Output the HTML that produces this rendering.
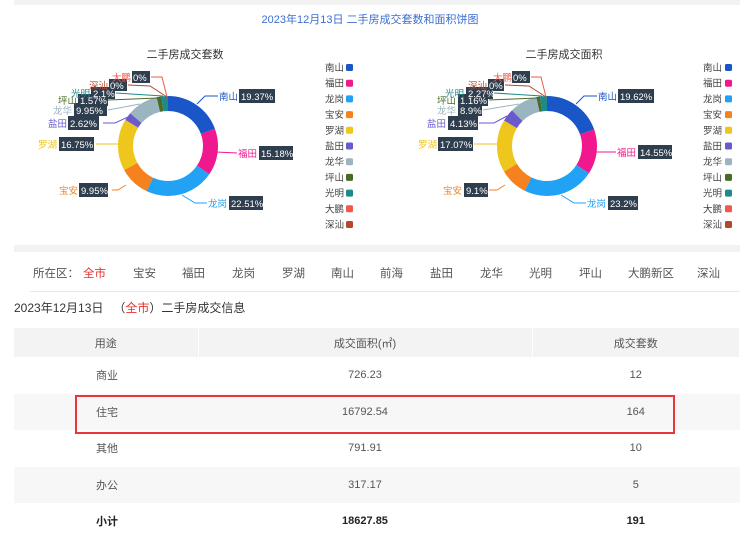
<!DOCTYPE html>
<html><head><meta charset="utf-8"><style>
*{margin:0;padding:0;box-sizing:border-box}
body{width:740px;height:534px;background:#fff;font-family:"Liberation Sans","Noto Sans CJK SC",sans-serif;color:#333;position:relative;overflow:hidden}
.abs{position:absolute}
svg text{font-family:"Liberation Sans","Noto Sans CJK SC",sans-serif}
.filter span{position:absolute;top:265px;font-size:11.5px;color:#555}
table{position:absolute;left:14px;top:328px;width:726px;border-collapse:collapse;font-size:11px;color:#555}
td{height:36.5px;text-align:center}
tr.h td{height:29px;background:#f3f3f3;border-right:1px solid #fff}
tr.g td{background:#f7f7f7}
td.l{text-align:left;padding-left:82px}
</style></head><body>
<div class="abs" style="left:14px;top:0;width:726px;height:5px;background:#f2f2f2"></div>
<div class="abs" style="left:0;top:11px;width:740px;text-align:center;font-size:11px;color:#3b6fd1">2023年12月13日 二手房成交套数和面积饼图</div>
<svg class="abs" style="left:0;top:0" width="740" height="240" font-size="9.5">
<text x="185" y="58" text-anchor="middle" font-size="11" fill="#333">二手房成交套数</text>
<text x="564" y="58" text-anchor="middle" font-size="11" fill="#333">二手房成交面积</text>
<g fill="none" stroke-width="15" transform="rotate(-90 168 146)">
<circle cx="168" cy="146" r="42.5" pathLength="100" stroke="#1a56c8" stroke-dasharray="19.37 80.63" stroke-dashoffset="0"/>
<circle cx="168" cy="146" r="42.5" pathLength="100" stroke="#f0188e" stroke-dasharray="15.18 84.82" stroke-dashoffset="-19.37"/>
<circle cx="168" cy="146" r="42.5" pathLength="100" stroke="#22a2f5" stroke-dasharray="22.51 77.49" stroke-dashoffset="-34.55"/>
<circle cx="168" cy="146" r="42.5" pathLength="100" stroke="#f5821f" stroke-dasharray="9.95 90.05" stroke-dashoffset="-57.06"/>
<circle cx="168" cy="146" r="42.5" pathLength="100" stroke="#eec61c" stroke-dasharray="16.75 83.25" stroke-dashoffset="-67.01"/>
<circle cx="168" cy="146" r="42.5" pathLength="100" stroke="#6a5acd" stroke-dasharray="2.62 97.38" stroke-dashoffset="-83.76"/>
<circle cx="168" cy="146" r="42.5" pathLength="100" stroke="#9ab5bf" stroke-dasharray="9.95 90.05" stroke-dashoffset="-86.38"/>
<circle cx="168" cy="146" r="42.5" pathLength="100" stroke="#4a6b27" stroke-dasharray="1.57 98.43" stroke-dashoffset="-96.33"/>
<circle cx="168" cy="146" r="42.5" pathLength="100" stroke="#1e8a8a" stroke-dasharray="2.1 97.9" stroke-dashoffset="-97.9"/>
</g>
<g fill="none" stroke-width="15" transform="rotate(-90 547 146)">
<circle cx="547" cy="146" r="42.5" pathLength="100" stroke="#1a56c8" stroke-dasharray="19.62 80.38" stroke-dashoffset="0"/>
<circle cx="547" cy="146" r="42.5" pathLength="100" stroke="#f0188e" stroke-dasharray="14.55 85.45" stroke-dashoffset="-19.62"/>
<circle cx="547" cy="146" r="42.5" pathLength="100" stroke="#22a2f5" stroke-dasharray="23.2 76.8" stroke-dashoffset="-34.17"/>
<circle cx="547" cy="146" r="42.5" pathLength="100" stroke="#f5821f" stroke-dasharray="9.1 90.9" stroke-dashoffset="-57.37"/>
<circle cx="547" cy="146" r="42.5" pathLength="100" stroke="#eec61c" stroke-dasharray="17.07 82.93" stroke-dashoffset="-66.47"/>
<circle cx="547" cy="146" r="42.5" pathLength="100" stroke="#6a5acd" stroke-dasharray="4.13 95.87" stroke-dashoffset="-83.54"/>
<circle cx="547" cy="146" r="42.5" pathLength="100" stroke="#9ab5bf" stroke-dasharray="8.9 91.1" stroke-dashoffset="-87.67"/>
<circle cx="547" cy="146" r="42.5" pathLength="100" stroke="#4a6b27" stroke-dasharray="1.16 98.84" stroke-dashoffset="-96.57"/>
<circle cx="547" cy="146" r="42.5" pathLength="100" stroke="#1e8a8a" stroke-dasharray="2.27 97.73" stroke-dashoffset="-97.73"/>
</g>
<g fill="none" stroke-width="1">
<polyline points="197,104 205,96 218,96" stroke="#1a56c8"/>
<polyline points="216,152 237,153" stroke="#f0188e"/>
<polyline points="182,195 195,203 207,203" stroke="#22a2f5"/>
<polyline points="126,185 118,190 112,190" stroke="#f5821f"/>
<polyline points="96,144 118,144" stroke="#eec61c"/>
<polyline points="103,123 115,123 128,117" stroke="#6a5acd"/>
<polyline points="108,110 140,104" stroke="#9ab5bf"/>
<polyline points="108,100 158,98" stroke="#4a6b27"/>
<polyline points="116,93 163,96" stroke="#1e8a8a"/>
<polyline points="128,85 150,86 167,97" stroke="#b5472a"/>
<polyline points="151,77 162,77 167,97" stroke="#f0584a"/>
<polyline points="576,104 584,96 597,96" stroke="#1a56c8"/>
<polyline points="595,152 616,152" stroke="#f0188e"/>
<polyline points="561,195 574,203 586,203" stroke="#22a2f5"/>
<polyline points="505,185 497,190 489,190" stroke="#f5821f"/>
<polyline points="474,144 497,144" stroke="#eec61c"/>
<polyline points="479,123 494,123 507,116" stroke="#6a5acd"/>
<polyline points="483,110 519,104" stroke="#9ab5bf"/>
<polyline points="489,100 537,98" stroke="#4a6b27"/>
<polyline points="494,93 542,96" stroke="#1e8a8a"/>
<polyline points="505,85 529,86 546,97" stroke="#b5472a"/>
<polyline points="531,77 541,77 546,97" stroke="#f0584a"/>
</g>
<g fill="#2e3e4e">
<rect x="239" y="89" width="36" height="14"/><rect x="259" y="146" width="34" height="14"/><rect x="229" y="196" width="34" height="14"/>
<rect x="79" y="183" width="29" height="14"/><rect x="59" y="137" width="35" height="14"/><rect x="68" y="116" width="31" height="14"/>
<rect x="74" y="103" width="33" height="13"/><rect x="78" y="94" width="30" height="12"/><rect x="91" y="87" width="24" height="12"/>
<rect x="109" y="79" width="18" height="12"/><rect x="132" y="71" width="18" height="12"/>
<rect x="618" y="89" width="36" height="14"/><rect x="638" y="145" width="34" height="14"/><rect x="608" y="196" width="30" height="14"/>
<rect x="464" y="183" width="24" height="14"/><rect x="438" y="137" width="35" height="14"/><rect x="448" y="116" width="30" height="14"/>
<rect x="458" y="103" width="24" height="13"/><rect x="458" y="94" width="30" height="12"/><rect x="466" y="87" width="27" height="12"/>
<rect x="488" y="79" width="16" height="12"/><rect x="512" y="71" width="18" height="12"/>
</g>
<g fill="#fff">
<text x="241" y="100">19.37%</text><text x="261" y="157">15.18%</text><text x="231" y="207">22.51%</text>
<text x="81" y="194">9.95%</text><text x="61" y="148">16.75%</text><text x="70" y="127">2.62%</text>
<text x="76" y="114">9.95%</text><text x="80" y="104">1.57%</text><text x="93" y="97">2.1%</text>
<text x="110" y="89">0%</text><text x="133" y="81">0%</text>
<text x="620" y="100">19.62%</text><text x="640" y="156">14.55%</text><text x="610" y="207">23.2%</text>
<text x="466" y="194">9.1%</text><text x="440" y="148">17.07%</text><text x="450" y="127">4.13%</text>
<text x="460" y="114">8.9%</text><text x="460" y="104">1.16%</text><text x="468" y="97">2.27%</text>
<text x="489" y="89">0%</text><text x="513" y="81">0%</text>
</g>
<g>
<text x="219" y="100" fill="#1a56c8">南山</text><text x="238" y="157" fill="#f0188e">福田</text><text x="208" y="207" fill="#22a2f5">龙岗</text>
<text x="59" y="194" fill="#f5821f">宝安</text><text x="38" y="148" fill="#eec61c">罗湖</text><text x="48" y="127" fill="#6a5acd">盐田</text>
<text x="53" y="114" fill="#9ab5bf">龙华</text><text x="58" y="104" fill="#4a6b27">坪山</text><text x="71" y="97" fill="#1e8a8a">光明</text>
<text x="89" y="89" fill="#b5472a">深汕</text><text x="112" y="81" fill="#f0584a">大鹏</text>
<text x="598" y="100" fill="#1a56c8">南山</text><text x="617" y="156" fill="#f0188e">福田</text><text x="587" y="207" fill="#22a2f5">龙岗</text>
<text x="443" y="194" fill="#f5821f">宝安</text><text x="418" y="148" fill="#eec61c">罗湖</text><text x="427" y="127" fill="#6a5acd">盐田</text>
<text x="437" y="114" fill="#9ab5bf">龙华</text><text x="437" y="104" fill="#4a6b27">坪山</text><text x="445" y="97" fill="#1e8a8a">光明</text>
<text x="468" y="89" fill="#b5472a">深汕</text><text x="493" y="81" fill="#f0584a">大鹏</text>
</g>
<g fill="#444" font-size="9.5">
<text x="325" y="71">南山</text><text x="325" y="86.7">福田</text><text x="325" y="102.4">龙岗</text><text x="325" y="118.1">宝安</text><text x="325" y="133.8">罗湖</text><text x="325" y="149.5">盐田</text><text x="325" y="165.2">龙华</text><text x="325" y="180.9">坪山</text><text x="325" y="196.6">光明</text><text x="325" y="212.3">大鹏</text><text x="325" y="228">深汕</text>
<text x="703" y="71">南山</text><text x="703" y="86.7">福田</text><text x="703" y="102.4">龙岗</text><text x="703" y="118.1">宝安</text><text x="703" y="133.8">罗湖</text><text x="703" y="149.5">盐田</text><text x="703" y="165.2">龙华</text><text x="703" y="180.9">坪山</text><text x="703" y="196.6">光明</text><text x="703" y="212.3">大鹏</text><text x="703" y="228">深汕</text>
</g>
<g>
<rect x="346" y="64" width="7" height="7" rx="1.5" fill="#1a56c8"/><rect x="346" y="79.7" width="7" height="7" rx="1.5" fill="#f0188e"/><rect x="346" y="95.4" width="7" height="7" rx="1.5" fill="#22a2f5"/><rect x="346" y="111.1" width="7" height="7" rx="1.5" fill="#f5821f"/><rect x="346" y="126.8" width="7" height="7" rx="1.5" fill="#eec61c"/><rect x="346" y="142.5" width="7" height="7" rx="1.5" fill="#6a5acd"/><rect x="346" y="158.2" width="7" height="7" rx="1.5" fill="#9ab5bf"/><rect x="346" y="173.9" width="7" height="7" rx="1.5" fill="#4a6b27"/><rect x="346" y="189.6" width="7" height="7" rx="1.5" fill="#1e8a8a"/><rect x="346" y="205.3" width="7" height="7" rx="1.5" fill="#f0584a"/><rect x="346" y="221" width="7" height="7" rx="1.5" fill="#b5472a"/>
<rect x="725" y="64" width="7" height="7" rx="1.5" fill="#1a56c8"/><rect x="725" y="79.7" width="7" height="7" rx="1.5" fill="#f0188e"/><rect x="725" y="95.4" width="7" height="7" rx="1.5" fill="#22a2f5"/><rect x="725" y="111.1" width="7" height="7" rx="1.5" fill="#f5821f"/><rect x="725" y="126.8" width="7" height="7" rx="1.5" fill="#eec61c"/><rect x="725" y="142.5" width="7" height="7" rx="1.5" fill="#6a5acd"/><rect x="725" y="158.2" width="7" height="7" rx="1.5" fill="#9ab5bf"/><rect x="725" y="173.9" width="7" height="7" rx="1.5" fill="#4a6b27"/><rect x="725" y="189.6" width="7" height="7" rx="1.5" fill="#1e8a8a"/><rect x="725" y="205.3" width="7" height="7" rx="1.5" fill="#f0584a"/><rect x="725" y="221" width="7" height="7" rx="1.5" fill="#b5472a"/>
</g>
</svg>
<div class="abs" style="left:14px;top:245px;width:726px;height:7px;background:#f2f2f2"></div>
<div class="filter">
<span style="left:33px">所在区：</span><span style="left:83px;color:#e8312f">全市</span><span style="left:133px">宝安</span><span style="left:182px">福田</span><span style="left:232px">龙岗</span><span style="left:282px">罗湖</span><span style="left:331px">南山</span><span style="left:380px">前海</span><span style="left:430px">盐田</span><span style="left:480px">龙华</span><span style="left:529px">光明</span><span style="left:579px">坪山</span><span style="left:628px">大鹏新区</span><span style="left:697px">深汕</span>
</div>
<div class="abs" style="left:30px;top:291px;width:710px;height:1px;background:#e8e8e8"></div>
<div class="abs" style="left:14px;top:299px;font-size:12px;color:#333">2023年12月13日 &nbsp;&nbsp;（<span style="color:#e8312f">全市</span>）二手房成交信息</div>
<table>
<tr class="h"><td style="width:184px">用途</td><td style="width:334px">成交面积(㎡)</td><td>成交套数</td></tr>
<tr><td class="l">商业</td><td>726.23</td><td>12</td></tr>
<tr class="g"><td class="l">住宅</td><td>16792.54</td><td>164</td></tr>
<tr><td class="l">其他</td><td>791.91</td><td>10</td></tr>
<tr class="g"><td class="l">办公</td><td>317.17</td><td>5</td></tr>
<tr style="font-weight:bold;color:#222"><td class="l">小计</td><td>18627.85</td><td>191</td></tr>
</table>
<div class="abs" style="left:75px;top:395px;width:600px;height:39px;border:2px solid #e8363a"></div>
</body></html>
